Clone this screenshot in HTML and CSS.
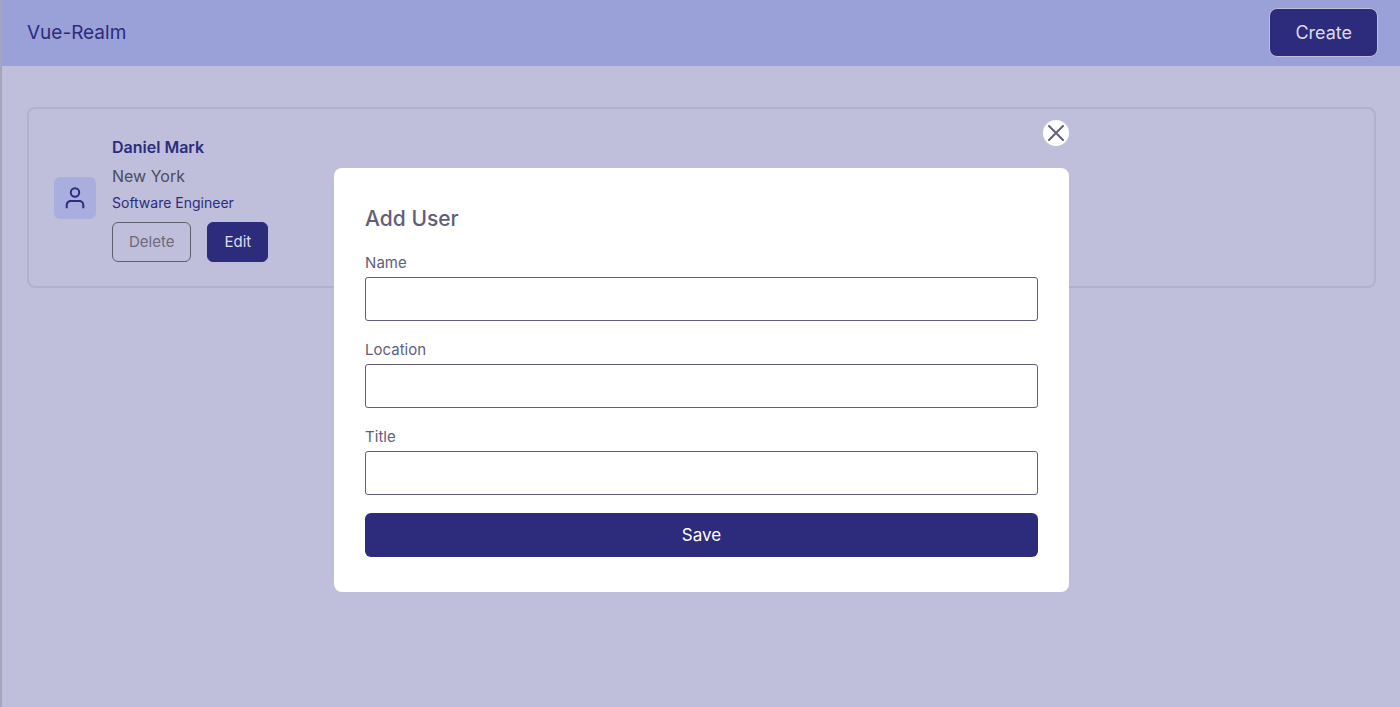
FILE: index.html
```html
<!DOCTYPE html>
<html lang="en">
<head>
<meta charset="utf-8">
<meta name="viewport" content="width=device-width, initial-scale=1">
<title>Vue-Realm</title>
<link rel="stylesheet" href="styles.css">
</head>
<body>
<div class="page">
  <header class="topbar">
    <h1 class="brand">Vue-Realm</h1>
    <button class="create" type="button">Create</button>
  </header>
  <main class="users">
    <article class="user-card">
      <span class="avatar">
        <svg viewBox="0 0 24 24" width="24" height="24" fill="none" stroke="currentColor" stroke-width="2" aria-hidden="true">
          <circle cx="12" cy="6.5" r="4.2"/>
          <path d="M3.7 22.3V19a4 4 0 0 1 4-4h8.6a4 4 0 0 1 4 4v3.3"/>
        </svg>
      </span>
      <div class="details">
        <h2 class="name">Daniel Mark</h2>
        <p class="location">New York</p>
        <p class="job">Software Engineer</p>
        <div class="actions">
          <button class="small delete" type="button">Delete</button>
          <button class="small edit" type="button">Edit</button>
        </div>
      </div>
    </article>
  </main>
</div>
<div class="overlay">
  <div class="modal" role="dialog" aria-labelledby="modal-title">
    <button class="close" type="button" aria-label="Close">
      <svg viewBox="0 0 16 16" width="16" height="16" fill="none" stroke="currentColor" stroke-width="2" stroke-linecap="round" aria-hidden="true">
        <path d="M1 1l14 14M15 1L1 15"/>
      </svg>
    </button>
    <form class="form">
      <h2 class="form-title" id="modal-title">Add User</h2>
      <label class="label" for="name">Name</label>
      <input class="field" id="name" type="text">
      <label class="label" for="location">Location</label>
      <input class="field" id="location" type="text">
      <label class="label" for="title">Title</label>
      <input class="field" id="title" type="text">
      <button class="save" type="button">Save</button>
    </form>
  </div>
</div>
</body>
</html>
```
FILE: styles.css
```css
* {
  box-sizing: border-box;
}

body,
h1,
h2,
p {
  margin: 0;
}

body,
button,
input {
  font-family: Inter, "Liberation Sans", sans-serif;
}

body {
  background: #bfbfdb;
  color: #2d2b7c;
}

.page {
  min-height: 100vh;
  border-left: 2px solid #a6a5ba;
}

.topbar {
  display: flex;
  align-items: center;
  justify-content: space-between;
  padding: 8px 22px 9px 25px;
  background: #9aa0d8;
}

.brand {
  font-size: 19px;
  line-height: 28px;
  font-weight: 400;
}

.create {
  padding: 9px 25px;
  border: 1px solid #bfbfdb;
  border-radius: 8px;
  background: #2d2b7c;
  color: #dcdcec;
  font-size: 18px;
  line-height: 29px;
}

.users {
  padding: 41px 24px 24px 25px;
}

.user-card {
  display: flex;
  align-items: center;
  gap: 16px;
  padding: 24px 25px;
  border: 2px solid #b2b1cc;
  border-radius: 8px;
}

.avatar {
  display: flex;
  align-items: center;
  justify-content: center;
  width: 42px;
  height: 42px;
  border-radius: 6px;
  background: #a9aede;
}

.name {
  font-size: 16px;
  line-height: 28px;
  font-weight: 600;
}

.location {
  color: #4c4a5e;
  font-size: 16px;
  line-height: 30px;
}

.job {
  font-size: 14px;
  line-height: 24px;
}

.actions {
  display: flex;
  gap: 16px;
  padding-top: 7px;
}

.small {
  padding: 9px 16px;
  border: 1px solid #2d2b7c;
  border-radius: 6px;
  font-size: 15px;
  line-height: 20px;
}

.delete {
  border-color: #615e6e;
  background: transparent;
  color: #6c697c;
}

.edit {
  background: #2d2b7c;
  color: #dcdcec;
}

.overlay {
  position: fixed;
  inset: 0;
  display: flex;
  align-items: flex-start;
  justify-content: center;
  padding: 120px 0 0 3px;
}

.modal {
  display: flex;
  flex-direction: column;
  gap: 22px;
  width: 52.6%;
}

.close {
  display: flex;
  align-items: center;
  justify-content: center;
  align-self: flex-end;
  width: 26px;
  height: 26px;
  padding: 0;
  border: 0;
  border-radius: 50%;
  background: #fff;
  color: #615e7a;
}

.form {
  display: flex;
  flex-direction: column;
  padding: 35px 31px;
  border-radius: 8px;
  background: #fff;
  color: #615e7a;
}

.form-title {
  padding-bottom: 15px;
  font-size: 21px;
  line-height: 32px;
  font-weight: 500;
}

.label {
  padding-bottom: 1px;
  font-size: 15px;
  line-height: 26px;
}

.field {
  width: 100%;
  height: 44px;
  margin-bottom: 16px;
  padding: 8px 12px;
  border: 1px solid #615e7a;
  border-radius: 3px;
  background: #fff;
  font-size: 16px;
}

.save {
  margin-top: 2px;
  padding: 8px;
  border: 0;
  border-radius: 6px;
  background: #2d2b7c;
  color: #fff;
  font-size: 17px;
  line-height: 28px;
}
```
